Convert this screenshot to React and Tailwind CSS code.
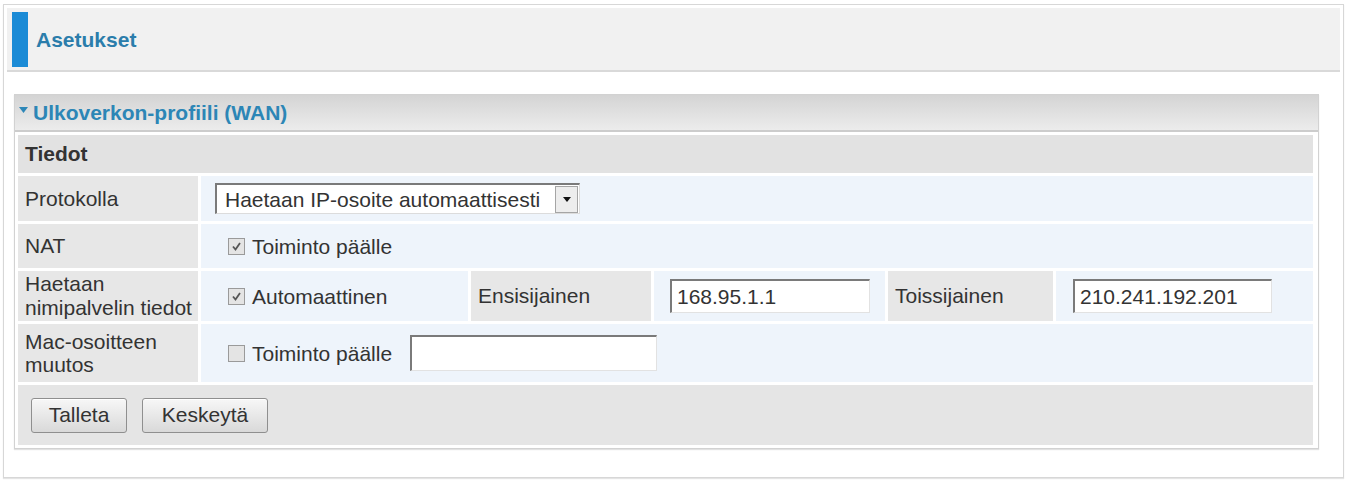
import React from 'react';

const label = 'bg-[#e7e7e7] pl-[7px] align-middle';
const value = 'bg-[#eef4fb] align-middle';

function Check({ checked }) {
  return (
    <span className="inline-flex items-center justify-center w-[17px] h-[17px] border border-[#9a9a9a] bg-[#e4e4e4] shrink-0">
      {checked && (
        <svg width="11" height="11" viewBox="0 0 11 11">
          <path d="M2 5.5 L4.5 8.5 L9 2" fill="none" stroke="#555" strokeWidth="1.8" />
        </svg>
      )}
    </span>
  );
}

function TextBox({ w, h, text }) {
  return (
    <div
      className={`${w} ${h} bg-white border-t-2 border-l-2 border-r border-b border-t-[#7a7a7a] border-l-[#7a7a7a] border-r-[#e2e2e2] border-b-[#e2e2e2] flex items-center pl-[5px] leading-none`}
    >
      {text}
    </div>
  );
}

function Button({ w, children }) {
  return (
    <div className={`${w} h-[35px] rounded-[3px] border border-[#8f8f8f] bg-gradient-to-b from-[#f7f7f7] to-[#d9d9d9] flex items-center justify-center shadow-[inset_0_1px_0_#fff]`}>
      {children}
    </div>
  );
}

export default function App() {
  return (
    <div className="min-h-screen bg-white pl-[3px] pt-[4px] font-['Liberation_Sans',Arial,sans-serif] text-[21px] text-[#333]">
      <div className="w-[1341px] h-[474px] border border-[#d7d7d7] p-[3px] shadow-[0_1px_1px_#e4e4e4]">
        {/* page header */}
        <div className="h-[64px] bg-[#f1f1f1] border-b-2 border-[#d9d9d9] flex items-center pl-[5px] gap-[8px]">
          <div className="w-[16px] h-[55px] bg-[#1b8bd6]" />
          <span className="font-bold text-[#2b7dab] leading-none">Asetukset</span>
        </div>

        {/* WAN panel */}
        <div className="mt-[22px] ml-[7px] w-[1305px] border border-[#d2d2d2] shadow-[0_1px_1px_#e2e2e2]">
          <div className="h-[37px] bg-gradient-to-b from-[#d4d4d4] to-[#ececec] border-b-2 border-[#cccccc] flex items-center pl-[4px] gap-[5px]">
            <svg width="9" height="6" viewBox="0 0 9 6" className="mb-[6px]">
              <path d="M0 0 H9 L4.5 6 Z" fill="#2d87b8" />
            </svg>
            <span className="font-bold text-[#2c86b6] leading-none">Ulkoverkon-profiili (WAN)</span>
          </div>

          <table className="table-fixed border-separate border-spacing-[3px] w-[1301px]">
            <colgroup>
              <col className="w-[180px]" />
              <col className="w-[267px]" />
              <col className="w-[180px]" />
              <col className="w-[231px]" />
              <col className="w-[165px]" />
              <col className="w-[257px]" />
            </colgroup>
            <tbody>
              <tr className="h-[38px]">
                <td colSpan={6} className="bg-[#e2e2e2] pl-[7px] font-bold align-middle">Tiedot</td>
              </tr>
              <tr className="h-[45px]">
                <td className={label}>Protokolla</td>
                <td colSpan={5} className={value}>
                  <div className="ml-[14px] w-[365px] h-[31px] bg-white border-t-2 border-l-2 border-t-[#7a7a7a] border-l-[#7a7a7a] border-r border-b border-r-[#dcdcdc] border-b-[#dcdcdc] flex items-center justify-between pl-[8px] pr-[1px]">
                    <span className="leading-none whitespace-nowrap">Haetaan IP-osoite automaattisesti</span>
                    <div className="w-[23px] h-[27px] border border-[#a5a5a5] bg-[#ededed] flex items-center justify-center">
                      <svg width="8" height="5" viewBox="0 0 8 5">
                        <path d="M0 0 H8 L4 5 Z" fill="#111" />
                      </svg>
                    </div>
                  </div>
                </td>
              </tr>
              <tr className="h-[44px]">
                <td className={label}>NAT</td>
                <td colSpan={5} className={value}>
                  <div className="flex items-center gap-[7px] pl-[27px]">
                    <Check checked />
                    <span className="leading-none">Toiminto päälle</span>
                  </div>
                </td>
              </tr>
              <tr className="h-[50px]">
                <td className={`${label} leading-[24px]`}>
                  Haetaan
                  <br />
                  nimipalvelin tiedot
                </td>
                <td className={value}>
                  <div className="flex items-center gap-[7px] pl-[27px]">
                    <Check checked />
                    <span className="leading-none">Automaattinen</span>
                  </div>
                </td>
                <td className={label}>Ensisijainen</td>
                <td className={value}>
                  <div className="pl-[16px]">
                    <TextBox w="w-[200px]" h="h-[34px]" text="168.95.1.1" />
                  </div>
                </td>
                <td className={label}>Toissijainen</td>
                <td className={value}>
                  <div className="pl-[17px]">
                    <TextBox w="w-[199px]" h="h-[34px]" text="210.241.192.201" />
                  </div>
                </td>
              </tr>
              <tr className="h-[58px]">
                <td className={`${label} leading-[23px]`}>
                  Mac-osoitteen
                  <br />
                  muutos
                </td>
                <td colSpan={5} className={value}>
                  <div className="flex items-center pl-[27px]">
                    <Check />
                    <span className="leading-none ml-[7px] mr-[18px]">Toiminto päälle</span>
                    <TextBox w="w-[247px]" h="h-[36px]" text="" />
                  </div>
                </td>
              </tr>
              <tr className="h-[60px]">
                <td colSpan={6} className="bg-[#e5e5e5] align-middle">
                  <div className="flex items-center gap-[15px] pl-[13px]">
                    <Button w="w-[96px]">Talleta</Button>
                    <Button w="w-[126px]">Keskeytä</Button>
                  </div>
                </td>
              </tr>
            </tbody>
          </table>
        </div>
      </div>
    </div>
  );
}
